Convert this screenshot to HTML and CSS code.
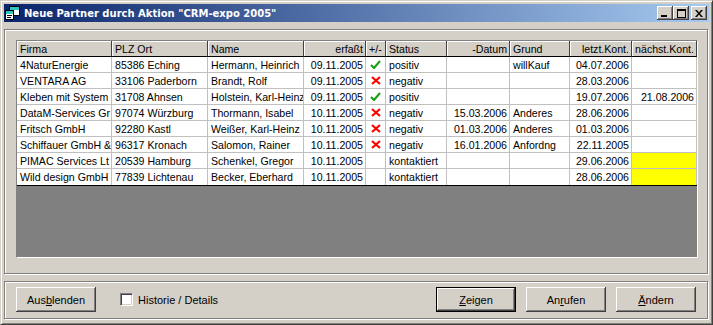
FILE: index.html
```html
<!DOCTYPE html>
<html lang="de">
<head>
    <meta charset="UTF-8">
    <title>Neue Partner durch Aktion "CRM-expo 2005"</title>
    <link rel="stylesheet" href="styles.css">
</head>
<body>
    <div class="window">
        <div class="titlebar">
            <svg class="app-icon" width="16" height="16" viewBox="0 0 16 16">
                <rect x="4.5" y="1.5" width="10" height="9" fill="#fff" stroke="#000"/>
                <rect x="5" y="2" width="9" height="3" fill="#2fc4c4"/>
                <rect x="0.5" y="5.5" width="8" height="9" fill="#fff" stroke="#000"/>
                <rect x="1" y="6" width="7" height="3" fill="#2fc4c4"/>
                <rect x="2" y="10" width="5" height="1" fill="#000"/>
                <rect x="2" y="12" width="4" height="1" fill="#000"/>
            </svg>
            <span class="title">Neue Partner durch Aktion "CRM-expo 2005"</span>
            <div class="caption-buttons">
                <span class="cap-btn">
                    <svg width="8" height="7" viewBox="0 0 8 7"><rect x="0" y="5" width="6" height="2" fill="#000"/></svg>
                </span>
                <span class="cap-btn">
                    <svg width="9" height="9" viewBox="0 0 9 9"><rect x="0.5" y="0.5" width="8" height="8" fill="none" stroke="#000"/><rect x="0" y="1" width="9" height="1" fill="#000"/></svg>
                </span>
                <span class="cap-btn close">
                    <svg width="8" height="7" viewBox="0 0 8 7"><path d="M0 0h2l2 2.5 2-2.5h2l-3 3.5 3 3.5h-2l-2-2.5-2 2.5h-2l3-3.5z" fill="#000"/></svg>
                </span>
            </div>
        </div>

        <div class="group list-panel">
            <div class="grid">
                <div class="grid-row head">
                    <div class="cell">Firma</div>
                    <div class="cell">PLZ Ort</div>
                    <div class="cell">Name</div>
                    <div class="cell r">erfaßt</div>
                    <div class="cell">+/-</div>
                    <div class="cell">Status</div>
                    <div class="cell r">-Datum</div>
                    <div class="cell">Grund</div>
                    <div class="cell r">letzt.Kont.</div>
                    <div class="cell r">nächst.Kont.</div>
                </div>
                <div class="grid-body" id="grid-body">
                    <!-- rows come from the script -->
                </div>
            </div>
        </div>

        <div class="group footer">
            <button class="btn">Aus<u>b</u>lenden</button>
            <label class="check"><span class="box"></span>Historie / Details</label>
            <div class="spacer"></div>
            <button class="btn default"><u>Z</u>eigen</button>
            <button class="btn">An<u>r</u>ufen</button>
            <button class="btn"><u>Ä</u>ndern</button>
        </div>
    </div>

    <script>
        document.addEventListener('DOMContentLoaded', function() {
            // the grid shows only what fits into the column
            const partners = [
                ['4NaturEnergie', '85386 Eching', 'Hermann, Heinrich', '09.11.2005', 'ok', 'positiv', '', 'willKauf', '04.07.2006', ''],
                ['VENTARA AG', '33106 Paderborn', 'Brandt, Rolf', '09.11.2005', 'no', 'negativ', '', '', '28.03.2006', ''],
                ['Kleben mit System', '31708 Ahnsen', 'Holstein, Karl-Heinz', '09.11.2005', 'ok', 'positiv', '', '', '19.07.2006', '21.08.2006'],
                ['DataM-Services Gr', '97074 Würzburg', 'Thormann, Isabel', '10.11.2005', 'no', 'negativ', '15.03.2006', 'Anderes', '28.06.2006', ''],
                ['Fritsch GmbH', '92280 Kastl', 'Weißer, Karl-Heinz', '10.11.2005', 'no', 'negativ', '01.03.2006', 'Anderes', '01.03.2006', ''],
                ['Schiffauer GmbH &', '96317 Kronach', 'Salomon, Rainer', '10.11.2005', 'no', 'negativ', '16.01.2006', 'Anfordng', '22.11.2005', ''],
                ['PIMAC Services Lt', '20539 Hamburg', 'Schenkel, Gregor', '10.11.2005', '', 'kontaktiert', '', '', '29.06.2006', 'due'],
                ['Wild design GmbH', '77839 Lichtenau', 'Becker, Eberhard', '10.11.2005', '', 'kontaktiert', '', '', '28.06.2006', 'due']
            ];

            const icons = {
                ok: '<svg width="11" height="10" viewBox="0 0 11 10"><path d="M1 5 L4 8 L10 1" fill="none" stroke="#10a010" stroke-width="2"/></svg>',
                no: '<svg width="10" height="9" viewBox="0 0 10 9"><path d="M1 1 L9 8 M9 1 L1 8" fill="none" stroke="#ff0000" stroke-width="2.2"/></svg>'
            };
            const rightCols = [3, 6, 8, 9];
            const body = document.getElementById('grid-body');

            partners.forEach(function(p) {
                const row = document.createElement('div');
                row.className = 'grid-row';
                p.forEach(function(value, i) {
                    const cell = document.createElement('div');
                    cell.className = 'cell';
                    if (rightCols.indexOf(i) !== -1) cell.classList.add('r');
                    if (i === 4) {
                        cell.classList.add('c');
                        cell.innerHTML = icons[value] || '';
                    } else if (i === 9 && value === 'due') {
                        cell.classList.add('due');
                    } else {
                        cell.textContent = value;
                    }
                    row.appendChild(cell);
                });
                body.appendChild(row);
            });
        });
    </script>
</body>
</html>
```

FILE: styles.css
```css
* {
    margin: 0;
    padding: 0;
    box-sizing: border-box;
}

body {
    background-color: #d4d0c8;
    font-family: 'Liberation Sans', Tahoma, Arial, sans-serif;
    font-size: 10.6px;
    color: #000;
}

.window {
    width: 713px;
    height: 325px;
    background-color: #d4d0c8;
    border: 1px solid;
    border-color: #d4d0c8 #404040 #404040 #d4d0c8;
    box-shadow: inset 1px 1px 0 #fff, inset -1px -1px 0 #808080;
    padding: 3px;
}

/* title bar */

.titlebar {
    height: 18px;
    display: flex;
    align-items: center;
    padding: 0 2px 0 1px;
    background: linear-gradient(to right, #0a246a, #a6caf0);
    color: #fff;
}

.app-icon {
    flex-shrink: 0;
    margin-right: 3px;
}

.title {
    font-family: 'DejaVu Sans', Tahoma, sans-serif;
    font-size: 10px;
    font-weight: bold;
    white-space: nowrap;
}

.caption-buttons {
    margin-left: auto;
    display: flex;
}

.cap-btn {
    width: 16px;
    height: 14px;
    display: flex;
    align-items: center;
    justify-content: center;
    background-color: #d4d0c8;
    box-shadow: inset -1px -1px 0 #404040, inset 1px 1px 0 #fff, inset -2px -2px 0 #808080;
}

.cap-btn.close {
    margin-left: 2px;
}

/* etched group panels */

.group {
    border: 1px solid #808080;
    box-shadow: 1px 1px 0 #fff, inset 1px 1px 0 #fff;
    margin: 7px 1px 0 0;
}

.list-panel {
    padding: 10px 10px 15px 11px;
}

/* grid */

.grid {
    width: 682px;
    height: 218px;
    background-color: #808080;
    border: 1px solid;
    border-color: #808080 #fff #fff #808080;
}

.grid-body {
    border-bottom: 1px solid #000;
}

.grid-row {
    display: grid;
    grid-template-columns: 95px 96px 96px 62px 20px 61px 63px 60px 62px 65px;
}

.cell {
    height: 16px;
    display: flex;
    align-items: center;
    padding: 0 2px 0 3px;
    background-color: #fff;
    border-right: 1px solid #c0c0c0;
    border-bottom: 1px solid #c0c0c0;
    white-space: nowrap;
    overflow: hidden;
}

.grid-body .grid-row:last-child .cell {
    border-bottom: none;
}

.cell.r {
    justify-content: flex-end;
}

.cell.c {
    justify-content: center;
    padding: 0;
}

.cell.due {
    background-color: #ffff00;
}

.head .cell {
    background-color: #d4d0c8;
    border-right-color: #404040;
    border-bottom-color: #000;
    box-shadow: inset 1px 1px 0 #fff;
}

/* bottom button bar */

.footer {
    display: flex;
    align-items: center;
    padding: 5px 11px 6px 11px;
}

.btn {
    width: 80px;
    height: 25px;
    font-family: inherit;
    font-size: 11px;
    color: #000;
    background-color: #d4d0c8;
    border: none;
    box-shadow: inset -1px -1px 0 #404040, inset 1px 1px 0 #fff, inset -2px -2px 0 #808080;
}

.btn + .btn {
    margin-left: 10px;
}

.btn.default {
    border: 1px solid #000;
    box-shadow: inset -1px -1px 0 #404040, inset 1px 1px 0 #fff, inset -2px -2px 0 #808080;
}

.check {
    display: flex;
    align-items: center;
    margin-left: 24px;
    font-size: 11px;
}

.check .box {
    width: 13px;
    height: 13px;
    margin-right: 5px;
    background-color: #fff;
    border: 1px solid;
    border-color: #808080 #fff #fff #808080;
    box-shadow: inset 1px 1px 0 #404040, inset -1px -1px 0 #d4d0c8;
}

.spacer {
    flex: 1;
}
```
